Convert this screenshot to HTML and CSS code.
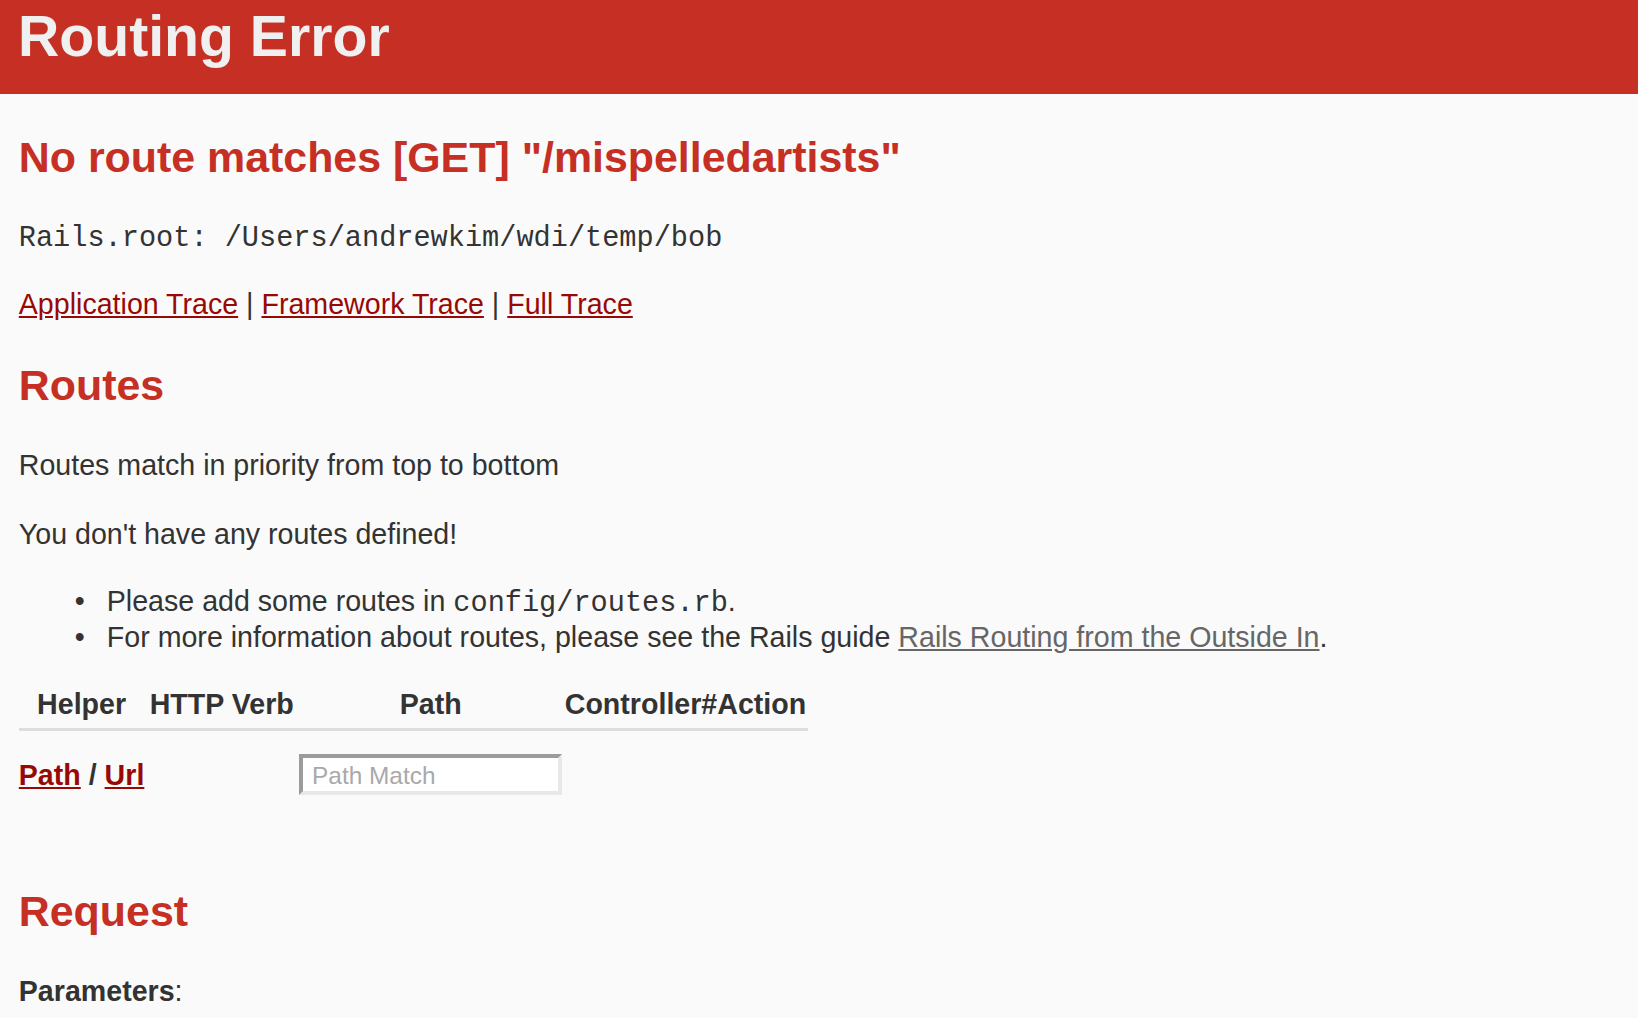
FILE: index.html
```html
<!DOCTYPE html>
<html lang="en">
<head>
<meta charset="utf-8">
<title>Action Controller: Exception caught</title>
<link rel="stylesheet" href="styles.css">
</head>
<body>
<header class="page-header">
  <h1 class="title">Routing Error</h1>
</header>
<main class="container">
  <h2 class="heading heading-error">No route matches [GET] "/mispelledartists"</h2>
  <p class="root"><code class="root-code">Rails.root: /Users/andrewkim/wdi/temp/bob</code></p>
  <p class="traces"><a class="link" href="#">Application Trace</a> | <a class="link" href="#">Framework Trace</a> | <a class="link" href="#">Full Trace</a></p>

  <h2 class="heading heading-routes">Routes</h2>
  <p class="text text-first">Routes match in priority from top to bottom</p>
  <p class="text">You don't have any routes defined!</p>
  <ul class="hints">
    <li class="hint">Please add some routes in <tt class="mono">config/routes.rb</tt>.</li>
    <li class="hint">For more information about routes, please see the Rails guide <a class="link link-visited" href="#">Rails Routing from the Outside In</a>.</li>
  </ul>

  <table class="route-table">
    <colgroup>
      <col class="col-helper">
      <col class="col-verb">
      <col class="col-path">
      <col class="col-action">
    </colgroup>
    <thead>
      <tr class="head-row">
        <th>Helper</th>
        <th>HTTP Verb</th>
        <th>Path</th>
        <th>Controller#Action</th>
      </tr>
      <tr class="search-row">
        <th class="cell-helper"><a class="link" href="#">Path</a> / <a class="link" href="#">Url</a></th>
        <th></th>
        <th class="cell-search"><input class="path-search" type="search" placeholder="Path Match"></th>
        <th></th>
      </tr>
    </thead>
  </table>

  <h2 class="heading heading-request">Request</h2>
  <p class="params"><b>Parameters</b>:</p>
</main>
</body>
</html>
```

FILE: styles.css
```css
html {
  background: #fafafa;
}

body {
  margin: 0;
  background: #fafafa;
  color: #333;
  font-family: "Liberation Sans", Arial, Helvetica, sans-serif;
  font-size: 28.6px;
  line-height: 39.6px;
}

.page-header {
  background: #c52f24;
  color: #f0f0f0;
  padding: 5px 18px 26px;
}

.title {
  margin: 0;
  font-size: 57.2px;
  line-height: 63px;
  font-weight: bold;
}

.container {
  padding: 0 18.8px;
}

.heading {
  margin: 0;
  color: #c52f24;
  font-size: 42.9px;
  line-height: 55px;
  font-weight: bold;
}

.heading-error {
  margin-top: 36.3px;
}

.root {
  margin: 33.3px 0 0;
  font-family: "Liberation Mono", "Courier New", monospace;
  font-size: 28.6px;
}

.root-code {
  font-family: inherit;
  font-size: inherit;
}

.traces {
  margin: 26.6px 0 0;
}

.link {
  color: #980905;
  text-decoration: underline;
}

.link-visited {
  color: #666;
}

.heading-routes {
  margin-top: 34px;
}

.text {
  margin: 28.6px 0 0;
}

.text-first {
  margin-top: 33px;
}

.hints {
  margin: 28.6px 0 0;
  padding-left: 88px;
  line-height: 36.6px;
  list-style: none;
}

.hint::before {
  content: "\2022";
  display: inline-block;
  width: 32px;
  margin-left: -32px;
}

.mono {
  font-family: "Liberation Mono", "Courier New", monospace;
  font-size: 28.6px;
  line-height: 30px;
}

.route-table {
  margin-top: 27.4px;
  border-collapse: separate;
  border-spacing: 0;
  table-layout: fixed;
  width: 789.7px;
}

.col-helper { width: 125.6px; }
.col-verb { width: 154.7px; }
.col-path { width: 263.4px; }
.col-action { width: 246px; }

.route-table th {
  font-weight: bold;
  line-height: 39.6px;
  white-space: nowrap;
}

.head-row th {
  padding: 2px 0 3.4px;
  border-bottom: 3px solid #ddd;
  text-align: center;
}

.search-row th {
  padding: 22.7px 0 22px;
  vertical-align: top;
  text-align: left;
}

.search-row .cell-helper {
  padding-top: 24.5px;
}

.path-search {
  -webkit-appearance: none;
  appearance: none;
  display: block;
  box-sizing: border-box;
  width: 263.4px;
  height: 41px;
  margin: 0;
  padding: 2px 9px 0;
  border-width: 4px;
  border-style: solid;
  border-color: #9b9b9b #e8e8e8 #e8e8e8 #9b9b9b;
  border-radius: 0;
  background: #fff;
  color: #333;
  font-family: "Liberation Sans", Arial, sans-serif;
  font-size: 24.4px;
  outline: none;
}

.path-search::placeholder {
  color: #a9a9a9;
}

.heading-request {
  margin-top: 66.6px;
}

.params {
  margin: 33.4px 0 0;
}
```
